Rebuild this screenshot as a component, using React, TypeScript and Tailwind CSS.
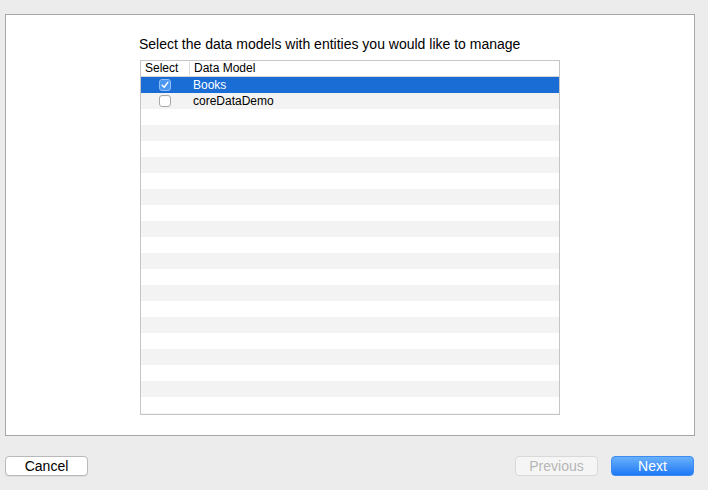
import { useState } from 'react';

type Model = { name: string; checked: boolean };

const ROW_COUNT = 22;

function Checkbox({ checked, onDark }: { checked: boolean; onDark: boolean }) {
  if (checked) {
    return (
      <div className={`w-[12px] h-[12px] rounded-[3px] flex items-center justify-center border ${onDark ? 'bg-[#4c97f2] border-[#8fbef8]' : 'bg-[#3d8ef0] border-[#2f7de0]'}`}>
        <svg width="8" height="8" viewBox="0 0 8 8">
          <path d="M1.2 4.2 L3.2 6.2 L6.8 1.4" fill="none" stroke="#fff" strokeWidth="1.5" strokeLinecap="round" strokeLinejoin="round" />
        </svg>
      </div>
    );
  }
  return <div className="w-[12px] h-[12px] rounded-[3px] bg-white border border-[#a9a9a9] shadow-[inset_0_1px_0_rgba(0,0,0,0.04)]" />;
}

export default function App() {
  const [models, setModels] = useState<Model[]>([
    { name: 'Books', checked: true },
    { name: 'coreDataDemo', checked: false },
  ]);
  const [selected, setSelected] = useState(0);

  const toggle = (i: number) =>
    setModels(ms => ms.map((m, j) => (j === i ? { ...m, checked: !m.checked } : m)));

  const rows = Array.from({ length: ROW_COUNT }, (_, i) => i);

  return (
    <div className="w-[708px] h-[490px] bg-[#ececec] overflow-hidden" style={{ fontFamily: '"Liberation Sans", Arial, sans-serif' }}>
      <div className="ml-[5px] mt-[14px] w-[690px] h-[422px] bg-white border border-[#a6a6a6] flex flex-col items-center">
        <div className="w-[420px] pt-[20px]">
          <p className="-ml-px mb-[7px] text-[14px] leading-[18px] text-black whitespace-nowrap">Select the data models with entities you would like to manage</p>
          <div className="h-[355px] border border-[#c6c6c6] flex flex-col overflow-hidden">
            <div className="h-[16px] shrink-0 flex items-center border-b border-[#d6d6d6] text-[12px] leading-[15px] text-black bg-white">
              <div className="w-[48px] pl-[4px]">Select</div>
              <div className="w-px h-[13px] bg-[#dcdcdc]" />
              <div className="pl-[4px]">Data Model</div>
            </div>
            {rows.map(i => {
              const m = models[i];
              const isSel = m && i === selected;
              const bg = isSel ? 'bg-[#1a6dd5]' : i % 2 === 1 ? 'bg-[#f3f3f3]' : 'bg-white';
              return (
                <div key={i} onClick={() => m && setSelected(i)} className={`h-[16px] shrink-0 flex items-center text-[12px] leading-[15px] ${bg} ${isSel ? 'text-white' : 'text-black'}`}>
                  {m && (
                    <>
                      <div className="w-[48px] flex justify-center" onClick={() => toggle(i)}>
                        <Checkbox checked={m.checked} onDark={!!isSel} />
                      </div>
                      <div className="pl-[4px]">{m.name}</div>
                    </>
                  )}
                </div>
              );
            })}
          </div>
        </div>
      </div>
      <div className="flex justify-between pl-[5px] pr-[14px] pt-[20px]">
        <button className="w-[83px] h-[20px] rounded-[4px] bg-white border border-[#b9b9b9] shadow-[0_1px_0_rgba(0,0,0,0.06)] text-[14px] leading-[16px] text-black">Cancel</button>
        <div className="flex gap-[13px]">
          <button disabled className="w-[83px] h-[20px] rounded-[4px] bg-[#f5f5f5] border border-[#d9d9d9] text-[14px] leading-[16px] text-[#b5b5b5]">Previous</button>
          <button className="w-[83px] h-[20px] rounded-[4px] bg-gradient-to-b from-[#68b0fb] to-[#1b78f5] border border-[#3d8cf2] text-[14px] leading-[16px] font-medium text-white">Next</button>
        </div>
      </div>
    </div>
  );
}
